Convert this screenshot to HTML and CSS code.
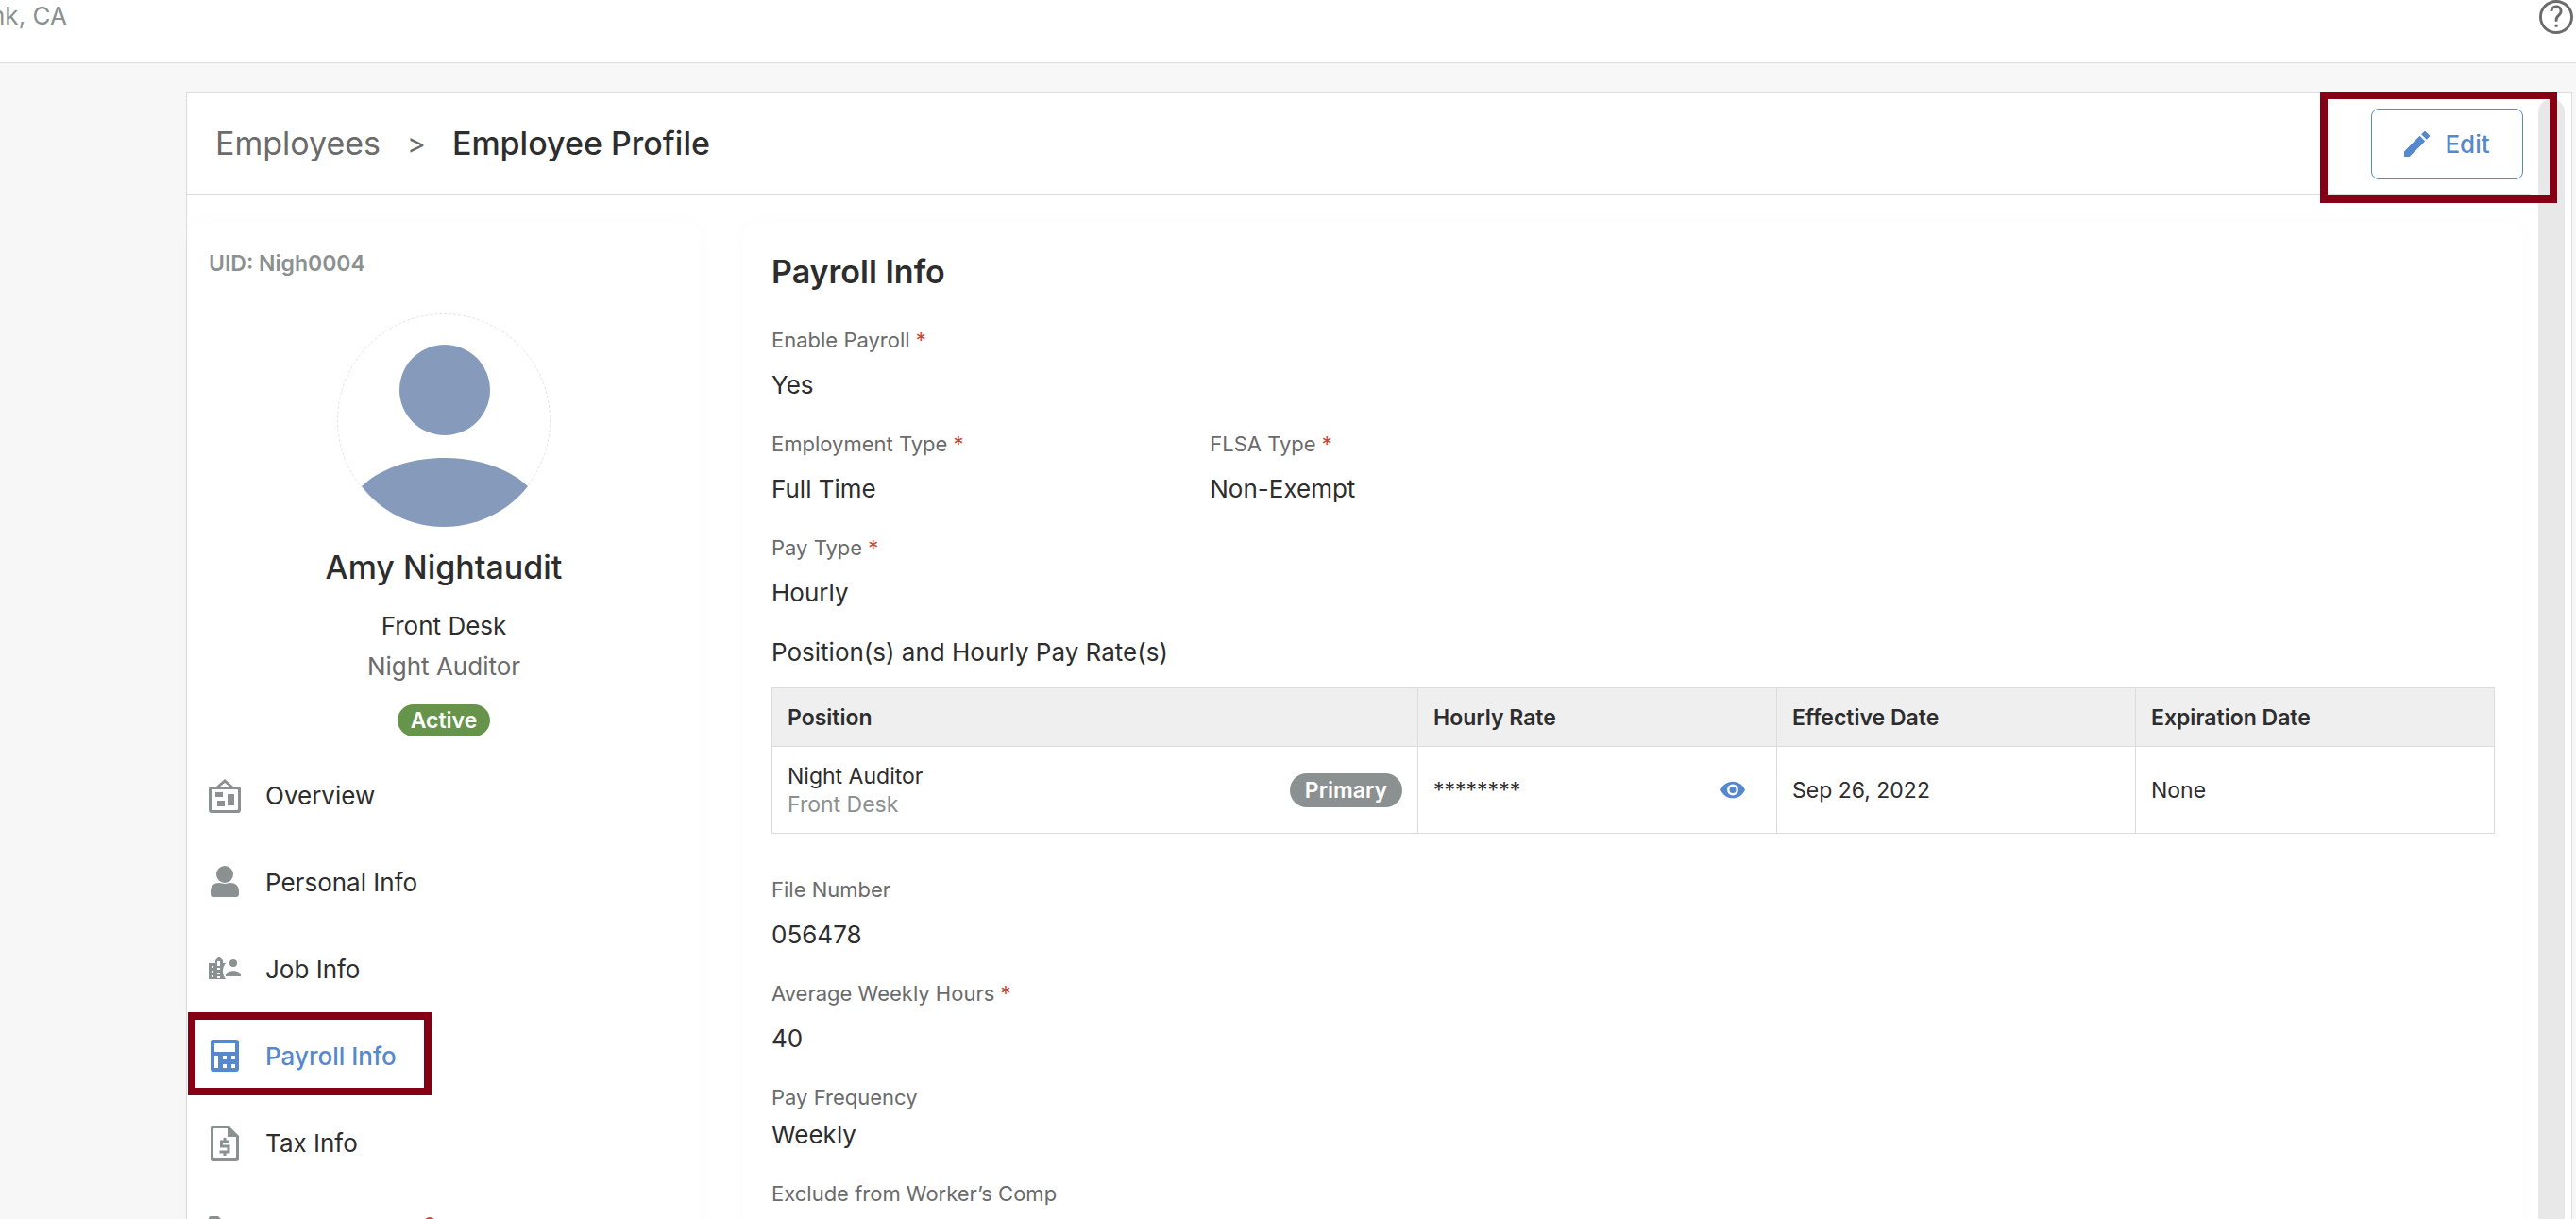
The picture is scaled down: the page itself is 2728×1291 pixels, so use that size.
FILE: index.html
```html
<!DOCTYPE html>
<html lang="en">
<head>
    <meta charset="UTF-8">
    <meta name="viewport" content="width=device-width, initial-scale=1.0">
    <title>Employee Profile</title>
    <link rel="stylesheet" href="styles.css">
</head>
<body>
    <header class="topbar">
        <span class="location">nk, CA</span>
        <button type="button" class="help" aria-label="Help">
            <svg viewBox="2 2 20 20" width="36" height="36"><path d="M11.200 18h1.700v-1.700h-1.700V18zM12 2C6.480 2 2 6.480 2 12s4.480 10 10 10 10-4.480 10-10S17.520 2 12 2zm0 18.400c-4.630 0-8.400-3.770-8.400-8.400s3.770-8.400 8.400-8.400 8.400 3.770 8.400 8.400-3.770 8.400-8.400 8.400zm0-15.400c-2.210 0-3.600 1.690-3.600 3.700h1.600c0-1.200.8-2.200 2-2.200s2 .9 2 2c0 2-2.750 2.100-2.750 5.500v.6h1.600v-.6c0-2.250 2.750-2.700 2.750-5.500 0-2.010-1.390-3.500-3.600-3.500z"/></svg>
        </button>
    </header>

    <div class="panel">
        <div class="page">
            <div class="page-head">
                <nav class="crumbs">
                    <a href="#">Employees</a>
                    <span class="sep">&gt;</span>
                    <h1>Employee Profile</h1>
                </nav>
                <button type="button" class="btn-edit">
                    <svg viewBox="3 3 18 18" width="27" height="27"><path d="M3 17.250V21h3.750L17.810 9.940l-3.750-3.750L3 17.250zM20.710 7.040a1 1 0 0 0 0-1.410l-2.340-2.340a1 1 0 0 0-1.410 0l-1.830 1.830 3.750 3.750 1.830-1.830z"/></svg>
                    Edit
                </button>
                <div class="mark mark-edit"></div>
            </div>

            <div class="columns">
                <aside class="card side">
                    <div class="uid">UID: Nigh0004</div>
                    <div class="profile">
                        <svg class="avatar" viewBox="0 0 226 226" width="226" height="226">
                            <circle cx="113" cy="113" r="112.500" fill="none" stroke="#dfe5ee" stroke-dasharray="3 2"/>
                            <circle cx="114" cy="81" r="48"/>
                            <path d="M26 183C46 164 78 153 114 153s68 11 88 30C182 209 149 226 113 226S46 209 26 183z"/>
                        </svg>
                        <h2>Amy Nightaudit</h2>
                        <p>Front Desk</p>
                        <p class="muted">Night Auditor</p>
                        <span class="badge active">Active</span>
                    </div>
                    <!-- side menu -->
                    <nav class="menu">
                        <a href="#">
                            <svg viewBox="0 0 34 38" width="34" height="38"><path d="M17 1L8 9H3a3 3 0 0 0-3 3v22a3 3 0 0 0 3 3h28a3 3 0 0 0 3-3V12a3 3 0 0 0-3-3h-5zm0 4l5 4H12zM4 12h26a1 1 0 0 1 1 1v20a1 1 0 0 1-1 1H4a1 1 0 0 1-1-1V13a1 1 0 0 1 1-1zM7 15v5h8v-5zM20 17v12h7V17zM9 24v6h8v-6z" fill-rule="evenodd"/></svg>
                            Overview
                        </a>
                        <a href="#">
                            <svg viewBox="0 0 34 38" width="34" height="38"><circle cx="17" cy="10" r="9"/><path d="M2 30v-2c0-6 4-9 9-9 2 0 4 1 6 1s4-1 6-1c5 0 9 3 9 9v2c0 3-1 4-3 4H5c-2 0-3-1-3-4z"/></svg>
                            Personal Info
                        </a>
                        <a href="#">
                            <svg viewBox="0 0 34 38" width="34" height="38"><path d="M0 12h7v-3l4-4 4 4v3h3c-4 5-4 11 0 17H0zM3 15v2h2v-2zm6-5v5h3v-5zM9 17v2h3v-2zM3 20v2h2v-2zm6 2v2h3v-2zM3 25v2h2v-2zm6 1v2h3v-2z" fill-rule="evenodd"/><circle cx="26" cy="12" r="4"/><path d="M18 26v-2c2-5 14-5 16 0v2z"/></svg>
                            Job Info
                        </a>
                        <a href="#" class="current">
                            <svg viewBox="0 0 34 38" width="34" height="38"><path d="M5 1h24a3 3 0 0 1 3 3v28a3 3 0 0 1-3 3H5a3 3 0 0 1-3-3V4a3 3 0 0 1 3-3zM6 5v9h22V5zM6 18v13h4V18zM15 18v4h4v-4zM24 18v4h4v-4zM15 27v4h4v-4zM24 27v4h4v-4z" fill-rule="evenodd"/></svg>
                            Payroll Info
                            <span class="mark mark-menu"></span>
                        </a>
                        <a href="#">
                            <svg viewBox="0 0 34 38" width="34" height="38"><path d="M5 0h16l11 11v24a3 3 0 0 1-3 3H5a3 3 0 0 1-3-3V3a3 3 0 0 1 3-3zM6 3a1 1 0 0 0-1 1v29a1 1 0 0 0 1 1h22a1 1 0 0 0 1-1V12h-9V3z" fill-rule="evenodd"/><path d="M22 17h-8.500v5H21v6h-9.500M17 13v4m0 11v4" fill="none" stroke="currentColor" stroke-width="3"/></svg>
                            Tax Info
                        </a>
                        <a href="#" aria-label="Documents">
                            <svg viewBox="0 0 34 38" width="34" height="38"><path d="M2 4h8l4 4v25H2a2 2 0 0 1-2-2V6a2 2 0 0 1 2-2z"/></svg>
                            <span class="dot"></span>
                        </a>
                    </nav>
                </aside>

                <main class="card main">
                    <h2>Payroll Info</h2>
                    <dl class="fields">
                        <div class="field"><dt>Enable Payroll <i>*</i></dt><dd>Yes</dd></div>
                        <div class="field first"><dt>Employment Type <i>*</i></dt><dd>Full Time</dd></div>
                        <div class="field"><dt>FLSA Type <i>*</i></dt><dd>Non-Exempt</dd></div>
                        <div class="field first"><dt>Pay Type <i>*</i></dt><dd>Hourly</dd></div>
                    </dl>
                    <table class="rates">
                        <caption>Position(s) and Hourly Pay Rate(s)</caption>
                        <thead>
                            <tr>
                                <th class="wide">Position</th>
                                <th>Hourly Rate</th>
                                <th>Effective Date</th>
                                <th>Expiration Date</th>
                            </tr>
                        </thead>
                        <tbody>
                            <tr>
                                <td>
                                    <div class="cell">
                                        <div>Night Auditor<br><span class="dept">Front Desk</span></div>
                                        <span class="badge primary">Primary</span>
                                    </div>
                                </td>
                                <td>
                                    <div class="cell">
                                        ********
                                        <button type="button" class="eye" aria-label="Show rate">
                                            <svg viewBox="1 4 22 16" width="26" height="19"><path d="M12 4.500C7 4.500 2.730 7.610 1 12c1.730 4.390 6 7.500 11 7.500s9.270-3.110 11-7.500c-1.730-4.390-6-7.500-11-7.500zM12 17a5 5 0 1 1 0-10 5 5 0 0 1 0 10zm0-8a3 3 0 1 0 0 6 3 3 0 0 0 0-6z"/></svg>
                                        </button>
                                    </div>
                                </td>
                                <td>Sep 26, 2022</td>
                                <td>None</td>
                            </tr>
                        </tbody>
                    </table>
                    <dl class="fields">
                        <div class="field first"><dt>File Number</dt><dd>056478</dd></div>
                        <div class="field first"><dt>Average Weekly Hours <i>*</i></dt><dd>40</dd></div>
                        <div class="field first tight"><dt>Pay Frequency</dt><dd>Weekly</dd></div>
                        <div class="field first"><dt>Exclude from Worker’s Comp</dt></div>
                    </dl>
                </main>
            </div>
        </div>
        <div class="scrollbar"></div>
    </div>
</body>
</html>
```
FILE: styles.css
```css
* {
    box-sizing: border-box;
}

body {
    margin: 0;
    height: 100vh;
    overflow: hidden;
    display: flex;
    flex-direction: column;
    background-color: #f7f7f7;
    color: #2d2d2d;
    font-family: Inter, "Liberation Sans", sans-serif;
    font-size: 26px;
    line-height: 32px;
}

h1, h2, p, dl, dd {
    margin: 0;
}

svg {
    display: block;
    flex: none;
    fill: currentColor;
}

a {
    color: inherit;
    text-decoration: none;
}

button {
    padding: 0;
    border: 0;
    background: none;
    font: inherit;
    cursor: pointer;
}

/* top bar */
.topbar {
    flex: none;
    display: flex;
    justify-content: space-between;
    align-items: flex-start;
    height: 67px;
    padding-right: 3px;
    background-color: white;
    border-bottom: 1px solid #dcdcdc;
}

.location {
    margin-left: -10px;
    color: #8b9091;
    line-height: 34px;
}

.help {
    color: #6b6b6b;
}

/* white frame with the scroll area */
.panel {
    flex: 1;
    min-height: 0;
    display: flex;
    gap: 8px;
    margin: 30px 4px 0 197px;
    padding-right: 7px;
    background-color: white;
    border: 1px solid #dcdcdc;
    border-bottom: 0;
}

.page {
    flex: 1;
    min-width: 0;
}

.scrollbar {
    width: 28px;
    margin-top: 7px;
    background-color: #e8e8e8;
    border-radius: 14px 14px 0 0;
}

.page-head {
    position: relative;
    display: flex;
    justify-content: space-between;
    align-items: center;
    height: 108px;
    padding: 0 8px 0 30px;
    border-bottom: 1px solid #dcdcdc;
}

.crumbs {
    display: flex;
    align-items: center;
    gap: 28px;
    color: #6b6b6b;
    font-size: 34px;
    line-height: 40px;
}

.crumbs h1 {
    color: #2d2d2d;
    font-size: 34px;
    font-weight: 500;
}

.crumbs .sep {
    font-size: 30px;
}

.btn-edit {
    display: flex;
    align-items: center;
    justify-content: center;
    gap: 16px;
    width: 161px;
    height: 75px;
    margin-top: 2px;
    border: 1px solid #5588cc;
    border-radius: 8px;
    color: #5588cc;
    font-weight: 500;
}

/* red frames */
.mark {
    position: absolute;
    border: 8px solid #850014;
    pointer-events: none;
}

.mark-edit {
    top: -1px;
    right: -28px;
    z-index: 2;
    width: 251px;
    height: 118px;
}

.mark-menu {
    top: -1px;
    left: 1px;
    width: 258px;
    height: 88px;
}

.columns {
    display: flex;
    gap: 45px;
    padding: 30px 8px 0 0;
}

.card {
    background-color: white;
    border-radius: 16px;
    box-shadow: 0 0 24px rgba(0, 0, 0, 0.02);
}

/* left card */
.side {
    flex: none;
    width: 544px;
    padding-top: 27px;
}

.uid {
    padding-left: 23px;
    color: #8b9091;
    font-size: 23px;
    font-weight: 600;
}

.profile {
    display: flex;
    flex-direction: column;
    align-items: center;
    padding: 37px 0 17px;
}

.avatar {
    color: #869bbc;
}

.profile h2 {
    margin: 23px 0 26px;
    font-size: 34px;
    font-weight: 500;
    line-height: 40px;
}

.profile p {
    margin-bottom: 11px;
}

.profile .muted {
    margin-bottom: 24px;
    color: #6b6b6b;
}

.badge {
    border-radius: 19px;
    color: white;
    font-size: 23px;
    font-weight: 600;
}

.badge.active {
    padding: 1px 14px;
    background-color: #66944b;
}

.badge.primary {
    padding: 3px 16px;
    background-color: #8b9091;
}

.menu a {
    position: relative;
    display: flex;
    align-items: center;
    gap: 26px;
    height: 92px;
    padding-left: 23px;
}

.menu svg {
    color: #8b9091;
}

.menu .current,
.menu .current svg {
    color: #5588cc;
}

.menu .current {
    font-weight: 500;
}

.menu .dot {
    position: absolute;
    top: 32px;
    left: 251px;
    width: 12px;
    height: 12px;
    border-radius: 6px;
    background-color: #cc4433;
}

/* right card */
.main {
    flex: 1;
    min-width: 0;
    padding: 32px 30px;
}

.main h2 {
    margin-bottom: 36px;
    font-size: 34px;
    font-weight: 600;
    line-height: 40px;
}

.fields {
    display: grid;
    grid-template-columns: repeat(4, 1fr);
    gap: 30px 32px;
}

.first {
    grid-column-start: 1;
}

.field dt {
    margin-bottom: 16px;
    color: #6b6b6b;
    font-size: 22px;
}

.field.tight dt {
    margin-bottom: 8px;
}

.field i {
    color: #cc4433;
    font-style: normal;
}

.rates {
    width: 100%;
    margin: 31px 0 43px;
    border-collapse: collapse;
    table-layout: fixed;
    font-size: 23px;
    line-height: 30px;
}

.rates caption {
    padding-bottom: 21px;
    font-size: 26px;
    line-height: 32px;
    text-align: left;
}

.rates th,
.rates td {
    padding: 0 16px;
    border: 1px solid #dcdcdc;
    text-align: left;
}

.rates th {
    height: 62px;
    background-color: #efefef;
    font-weight: 600;
}

.rates th.wide {
    width: 37.5%;
}

.rates td {
    height: 92px;
}

.cell {
    display: flex;
    justify-content: space-between;
    align-items: center;
}

.dept {
    color: #8b9091;
}

.eye {
    margin-right: 17px;
    color: #5588cc;
}
```
